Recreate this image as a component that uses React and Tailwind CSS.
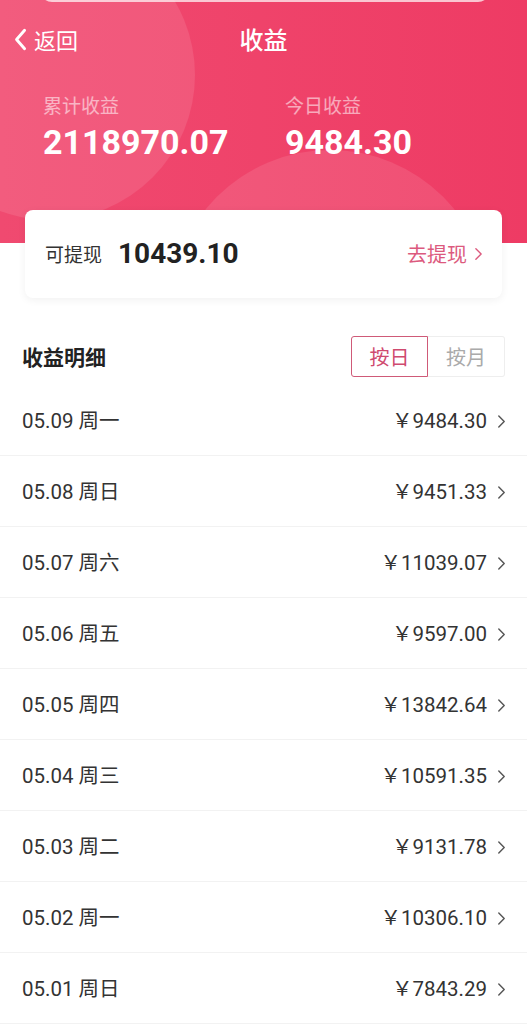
import React, { useState } from 'react';

const rows = [
  { date: '05.09 周一', amount: '9484.30' },
  { date: '05.08 周日', amount: '9451.33' },
  { date: '05.07 周六', amount: '11039.07' },
  { date: '05.06 周五', amount: '9597.00' },
  { date: '05.05 周四', amount: '13842.64' },
  { date: '05.04 周三', amount: '10591.35' },
  { date: '05.03 周二', amount: '9131.78' },
  { date: '05.02 周一', amount: '10306.10' },
  { date: '05.01 周日', amount: '7843.29' },
];

const numFont = { fontFamily: 'Roboto, "Noto Sans CJK SC", sans-serif' };

const Chevron = ({ className }) => (
  <svg viewBox="0 0 10 16" className={className} fill="none" stroke="currentColor" strokeWidth="1.6" strokeLinecap="round" strokeLinejoin="round">
    <path d="M2 2l6 6-6 6" />
  </svg>
);

const App = () => {
  const [mode, setMode] = useState('day');

  return (
    <div className="min-h-screen bg-white" style={{ fontFamily: '"Noto Sans CJK SC", "Noto Sans", sans-serif' }}>
      {/* Header */}
      <div className="relative h-[243px] overflow-hidden bg-gradient-to-r from-[#f04a70] to-[#ee3b64] text-white">
        <div className="absolute -left-[95px] -top-[70px] h-[290px] w-[290px] rounded-full bg-white/10" />
        <div className="absolute left-[170px] top-[150px] h-[320px] w-[320px] rounded-full bg-white/10" />
        <div className="absolute left-[40px] right-[37px] -top-[30px] h-[32px] rounded-xl bg-white/70" />

        <div className="relative flex h-[78px] items-center px-[13px]">
          <div className="flex items-center gap-[7px]">
            <svg viewBox="0 0 12 20" className="h-[23px] w-[14px]" fill="none" stroke="currentColor" strokeWidth="2.5" strokeLinecap="round" strokeLinejoin="round">
              <path d="M10 2L3 10l7 8" />
            </svg>
            <span className="text-[22px] leading-none">返回</span>
          </div>
          <div className="absolute left-0 right-0 text-center text-[24px] font-medium leading-none">收益</div>
        </div>

        <div className="relative mt-[14px] flex px-[43px]">
          <div className="w-[242px]">
            <div className="text-[19px] leading-[26px] text-white/55">累计收益</div>
            <div className="mt-[5px] text-[34px] font-bold leading-[38px]" style={numFont}>2118970.07</div>
          </div>
          <div>
            <div className="text-[19px] leading-[26px] text-white/55">今日收益</div>
            <div className="mt-[5px] text-[34px] font-bold leading-[38px]" style={numFont}>9484.30</div>
          </div>
        </div>
      </div>

      {/* Withdraw card */}
      <div className="relative mx-[25px] -mt-[33px] flex h-[88px] items-center rounded-lg bg-white pl-[20px] pr-[19px] shadow-[0_2px_8px_rgba(0,0,0,0.06)]">
        <span className="text-[19px] text-[#333]">可提现</span>
        <span className="ml-[16px] text-[28px] font-bold text-[#222]" style={numFont}>10439.10</span>
        <div className="ml-auto flex items-center gap-[7px] text-[#dc5a7e]">
          <span className="text-[20px]">去提现</span>
          <Chevron className="h-[14px] w-[9px]" />
        </div>
      </div>

      {/* Detail header */}
      <div className="mt-[38px] flex h-[41px] items-center pl-[22px] pr-[22px]">
        <span className="text-[21px] font-bold text-[#222]">收益明细</span>
        <div className="ml-auto flex h-[41px]">
          <button
            onClick={() => setMode('day')}
            className={`w-[77px] rounded-l-[3px] border text-[20px] ${
              mode === 'day' ? 'border-[#cf5a78] text-[#cf4a6f]' : 'border-[#eee] text-[#aaa]'
            }`}
          >
            按日
          </button>
          <button
            onClick={() => setMode('month')}
            className={`w-[77px] rounded-r-[3px] border text-[20px] ${
              mode === 'month' ? 'border-[#cf5a78] text-[#cf4a6f]' : 'border-l-0 border-[#eee] text-[#aaa]'
            }`}
          >
            按月
          </button>
        </div>
      </div>

      {/* List */}
      <div className="mt-[8px]">
        {rows.map((row) => (
          <div key={row.date} className="flex h-[71px] items-center border-b border-[#f2f2f2] pl-[22px] pr-[21px] pt-[2px] text-[#333]">
            <span className="text-[20.5px]" style={numFont}>{row.date}</span>
            <div className="ml-auto flex items-center gap-[10px]">
              <span className="text-[20.5px]" style={numFont}>￥{row.amount}</span>
              <Chevron className="h-[15px] w-[9px] text-[#555]" />
            </div>
          </div>
        ))}
      </div>
    </div>
  );
};

export default App;
